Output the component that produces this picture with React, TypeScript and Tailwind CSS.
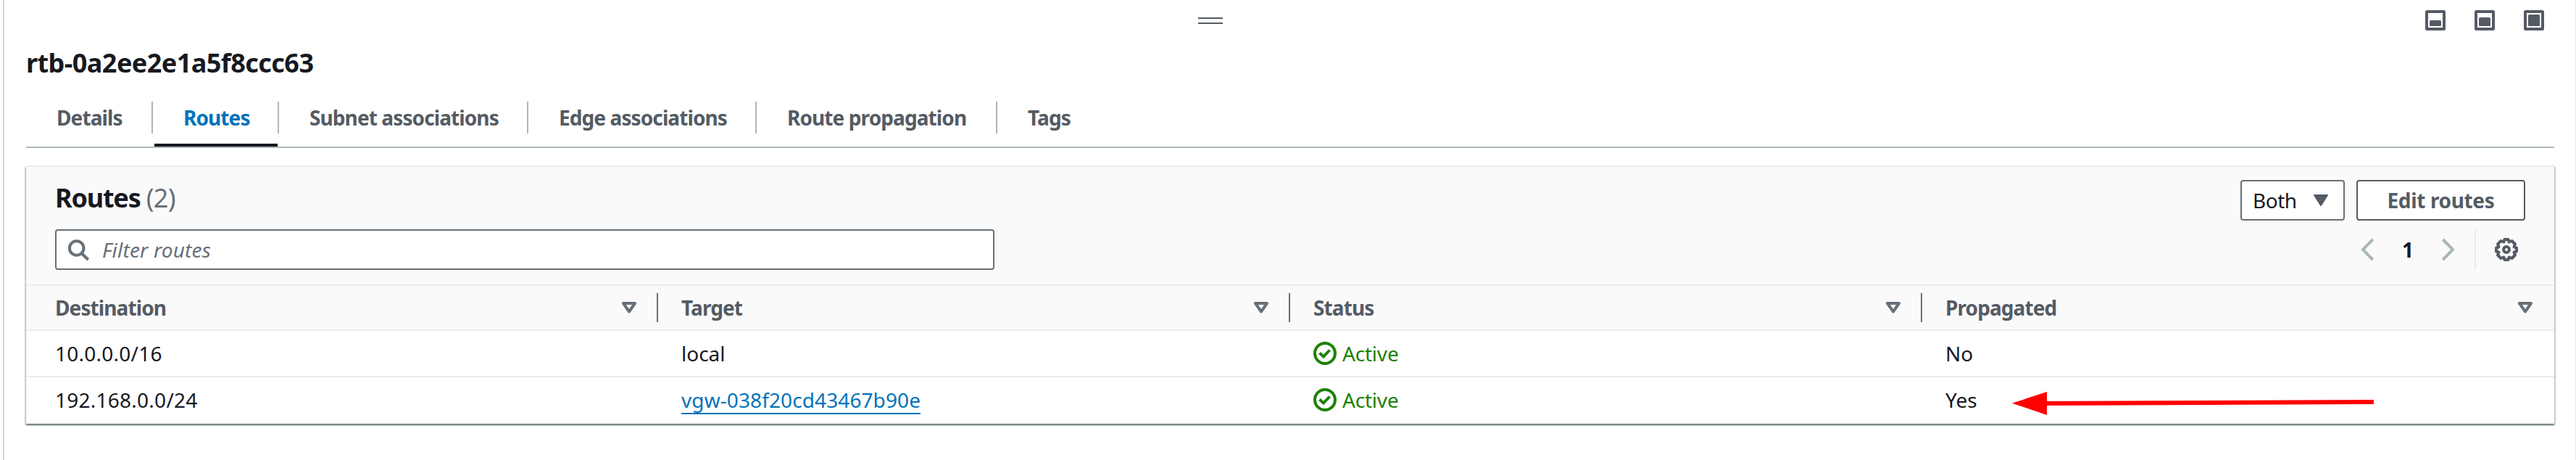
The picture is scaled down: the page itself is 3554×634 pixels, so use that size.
import type { ReactNode } from "react";

const TABS = [
  { label: "Details", width: "w-[175px]" },
  { label: "Routes", width: "w-[174px]" },
  { label: "Subnet associations", width: "w-[344px]" },
  { label: "Edge associations", width: "w-[315px]" },
  { label: "Route propagation", width: "w-[332px]" },
  { label: "Tags", width: "w-[150px]" },
];

const COLUMNS = ["Destination", "Target", "Status", "Propagated"];

const ROUTES = [
  { destination: "10.0.0.0/16", target: "local", isLink: false, status: "Active", propagated: "No" },
  { destination: "192.168.0.0/24", target: "vgw-038f20cd43467b90e", isLink: true, status: "Active", propagated: "Yes" },
];

function PanelIcon({ top }: { top: number }) {
  return (
    <svg viewBox="0 0 28 28" className="h-7 w-7 text-[#545b64]" aria-hidden>
      <rect x="2" y="2" width="24" height="24" rx="0.5" fill="none" stroke="currentColor" strokeWidth="4" strokeLinejoin="round" />
      <rect x="6" y={top} width="16" height={22 - top} rx="1.5" fill="currentColor" />
    </svg>
  );
}

function CheckIcon() {
  return (
    <svg viewBox="0 0 32 32" className="h-8 w-8 shrink-0" fill="none" stroke="currentColor" strokeWidth="4" aria-hidden>
      <circle cx="16" cy="16" r="14" />
      <path d="M8.5 15.5L14 20.500L22.500 11.500" />
    </svg>
  );
}

function GearIcon() {
  return (
    <svg viewBox="0 0 32 32" className="h-8 w-8 text-[#545b64]" fill="none" stroke="currentColor" strokeWidth="4" strokeLinejoin="round" aria-hidden>
      <path d="M13.500 2h5l1.200 3.500 3.800-1.500 4.500 4.500-1.500 3.800 3.500 1.200v5l-3.500 1.200 1.500 3.800-4.500 4.500-3.800-1.500-1.200 3.500h-5l-1.200-3.500-3.800 1.500-4.500-4.500 1.500-3.800-3.500-1.200v-5l3.500-1.200-1.500-3.800 4.500-4.500 3.800 1.500z" />
      <circle cx="16" cy="16" r="4" />
    </svg>
  );
}

function SortIcon() {
  return (
    <svg viewBox="0 0 20 16" className="h-4 w-5 text-[#687078]" aria-hidden>
      <path d="M2 2h16l-8 11.500z" fill="none" stroke="currentColor" strokeWidth="4" strokeLinejoin="round" />
    </svg>
  );
}

function Cell({ children, first = false }: { children: ReactNode; first?: boolean }) {
  return (
    <div className={["flex items-center", first ? "pl-10 tracking-[0.25px]" : "pl-8"].join(" ")}>
      {children}
    </div>
  );
}

export default function App() {
  return (
    <div className="relative h-[634px] w-[3554px] overflow-hidden border-r border-[#eaeded] bg-white pl-1 font-['Noto_Sans','Open_Sans',sans-serif] text-[28px] leading-[44px] text-[#16191f]">
      <div className="h-full border-l-2 border-[#d5dbdb] pr-[29px] pl-[30px]">
        <div className="flex h-14 items-start pl-[1617px]">
          <div className="mt-6 h-[9px] w-[34px] border-y-2 border-[#545b64]" />
          <div className="mt-3.5 mr-3.5 ml-auto flex gap-10">
            <PanelIcon top={14} />
            <PanelIcon top={10} />
            <PanelIcon top={6} />
          </div>
        </div>

        <h1 className="mt-[9px] mb-[23px] h-11 text-[36px] font-bold tracking-[-0.55px]">
          rtb-0a2ee2e1a5f8ccc63
        </h1>

        <nav className="flex h-[72px] border-b-2 border-[#aab7b8] pt-2">
          {TABS.map((tab, i) => (
            <div key={tab.label} className={tab.width}>
              <div
                className={[
                  "h-11 pl-[42px] font-bold tracking-[-0.9px] whitespace-nowrap",
                  i < TABS.length - 1 ? "border-r-2 border-[#aab7b8]" : "",
                  i === 1 ? "text-[#0073bb]" : "text-[#545b64]",
                ].join(" ")}
              >
                {tab.label}
              </div>
              {i === 1 ? <div className="mt-3.5 ml-0.5 h-1 w-[170px] bg-[#16191f]" /> : null}
            </div>
          ))}
        </nav>

        <section className="mt-6 h-[356px] border-t-2 border-[#eaeded] bg-white shadow-[0_2px_2px_0_rgba(0,28,36,0.5),2px_2px_2px_0_rgba(0,28,36,0.15),-2px_2px_2px_0_rgba(0,28,36,0.15)]">
          <div className="h-[162px] bg-[#fafafa] pr-10 pl-10">
            <div className="flex h-[86px] justify-between pt-[18px]">
              <h2 className="text-[36px] leading-[50px] font-bold tracking-[-1.2px]">
                Routes <span className="font-normal tracking-[-0.6px] text-[#687078]">(2)</span>
              </h2>
              <div className="flex gap-4">
                <button
                  type="button"
                  className="flex h-14 w-36 items-center rounded-[4px] border-2 border-[#687078] bg-white pl-[15px] tracking-[-0.5px]"
                >
                  Both
                  <svg viewBox="0 0 20 16" className="ml-[23px] h-4 w-5 text-[#545b64]" aria-hidden>
                    <path d="M1 1h18l-9 14z" fill="currentColor" stroke="currentColor" strokeWidth="2" strokeLinejoin="round" />
                  </svg>
                </button>
                <button
                  type="button"
                  className="h-14 w-[233px] rounded-[4px] border-2 border-[#545b64] bg-white text-center font-bold tracking-[-0.35px] text-[#545b64]"
                >
                  Edit routes
                </button>
              </div>
            </div>
            <div className="flex items-center justify-between">
              <div className="flex h-14 w-[1296px] items-center rounded-[4px] border-2 border-[#687078] bg-white pl-3.5 tracking-[0.2px] text-[#687078] italic">
                <svg viewBox="0 0 32 32" className="mr-[17px] h-8 w-8" fill="none" stroke="currentColor" strokeWidth="4" aria-hidden>
                  <circle cx="13.700" cy="14" r="9.800" />
                  <path d="M20.500 21l9.200 9" />
                </svg>
                Filter routes
              </div>
              <div className="flex items-center">
                <svg viewBox="0 0 20 32" className="h-8 w-5 text-[#aab7b8]" fill="none" stroke="currentColor" strokeWidth="4" aria-hidden>
                  <path d="M17.700 2L4 16l13.700 14" />
                </svg>
                <span className="w-[92px] text-center font-bold">1</span>
                <svg viewBox="0 0 20 32" className="h-8 w-5 text-[#aab7b8]" fill="none" stroke="currentColor" strokeWidth="4" aria-hidden>
                  <path d="M2.300 2L16 16L2.300 30" />
                </svg>
                <div className="mx-[26px] h-14 w-0.5 bg-[#eaeded]" />
                <div className="mr-2.5">
                  <GearIcon />
                </div>
              </div>
            </div>
          </div>

          <div className="grid h-16 grid-cols-4 border-y-2 border-[#eaeded] bg-[#fafafa] font-bold tracking-[-0.9px] text-[#545b64]">
            {COLUMNS.map((column, i) => (
              <div
                key={column}
                className={[
                  "my-2.5 flex items-center justify-between leading-10",
                  i === 0 ? "pl-10" : "pl-8",
                  i < COLUMNS.length - 1 ? "border-r-2 border-[#687078] pr-7" : "pr-[30px]",
                ].join(" ")}
              >
                {column}
                <SortIcon />
              </div>
            ))}
          </div>

          {ROUTES.map((route, i) => (
            <div
              key={route.destination}
              className={["grid h-16 grid-cols-4", i === 0 ? "border-b-2 border-[#eaeded]" : "pb-0.5"].join(" ")}
            >
              <Cell first>{route.destination}</Cell>
              <Cell>
                {route.isLink ? (
                  <a href="#vgw" className="h-10 border-b-2 border-[#0073bb] leading-10 tracking-[0.1px] text-[#0073bb]">
                    {route.target}
                  </a>
                ) : (
                  route.target
                )}
              </Cell>
              <Cell>
                <span className="flex items-center gap-2 tracking-[-0.2px] text-[#1d8102]">
                  <CheckIcon />
                  {route.status}
                </span>
              </Cell>
              <Cell>{route.propagated}</Cell>
            </div>
          ))}
        </section>
      </div>

      {/* Arrow pointing at the propagated route */}
      <svg viewBox="0 0 500 32" className="absolute top-[540px] left-[2776px] h-8 w-[500px]" fill="#f00" aria-hidden>
        <path d="M0 15.700L48 0V32z" />
        <path d="M47 13L499 11V17L47 19z" />
      </svg>
    </div>
  );
}
